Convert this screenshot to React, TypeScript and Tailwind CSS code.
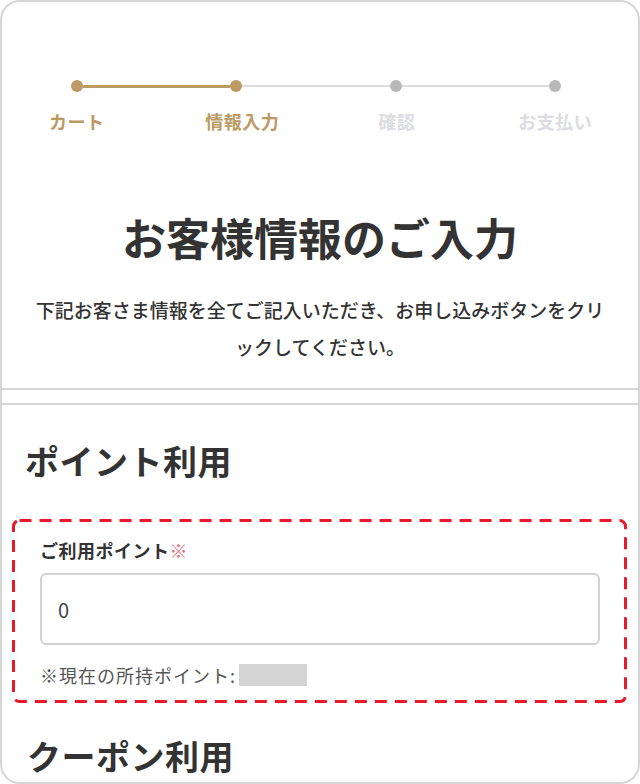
import { useState } from 'react'

const steps = [
  { label: 'カート', done: true, shift: '' },
  { label: '情報入力', done: true, shift: 'pl-[12px]' },
  { label: '確認', done: false, shift: 'pl-[2px]' },
  { label: 'お支払い', done: false, shift: '' },
]

function Stepper() {
  return (
    <div className="pt-[78px]">
      {/* track */}
      <div className="ml-[69px] flex w-[490px] items-center">
        {steps.map((s, i) => (
          <div key={s.label} className={i === 0 ? 'flex items-center' : 'flex flex-1 items-center'}>
            {i > 0 && (
              <div
                className={
                  s.done ? 'h-[3px] flex-1 bg-[#bb9a63]' : 'h-[2px] flex-1 bg-[#dcdcdc]'
                }
              />
            )}
            <div
              className={`h-3 w-3 shrink-0 rounded-full ${s.done ? 'bg-[#bb9a63]' : 'bg-[#b8b8b8]'}`}
            />
          </div>
        ))}
      </div>
      {/* labels */}
      <div className="-ml-[5px] mt-[17px] grid w-[638px] grid-cols-4">
        {steps.map((s) => (
          <div
            key={s.label}
            className={`text-center text-[18px] font-semibold leading-6 tracking-[0.5px] ${s.shift} ${
              s.done ? 'text-[#bb9a63]' : 'text-[#dcdce2]'
            }`}
          >
            {s.label}
          </div>
        ))}
      </div>
    </div>
  )
}

export default function App() {
  const [points, setPoints] = useState('0')

  return (
    <div className="h-[784px] w-[640px] bg-white font-['Noto_Sans_CJK_JP','Noto_Sans',sans-serif] text-[#333]">
      <div className="h-full w-full overflow-hidden rounded-[20px] border-2 border-[#d6d6d6]">
        <Stepper />

        {/* Heading */}
        <div className="pt-[76px] text-center">
          <h1 className="text-[44px] font-semibold leading-[56px] text-[#333]">
            お客様情報のご入力
          </h1>
          <p className="mx-auto mt-[26px] w-[585px] text-[19px] font-medium leading-[37px] text-[#333]">
            下記お客さま情報を全てご記入いただき、お申し込みボタンをクリックしてください。
          </p>
        </div>

        {/* Section dividers */}
        <div className="-mx-[2px] mt-[23px] border-b-2 border-[#d6d6d6]" />
        <div className="-mx-[2px] mt-[13px] border-t-2 border-[#d6d6d6]" />

        {/* Point section */}
        <section className="px-[10px]">
          <h2 className="mt-[34px] pl-[13px] text-[34px] font-semibold leading-[44px] tracking-[0.5px] text-[#333]">
            ポイント利用
          </h2>

          <div className="relative mt-[36px] h-[184px] w-[615px] px-[28px] pt-[19px]">
            <svg className="pointer-events-none absolute inset-0 h-full w-full" aria-hidden="true">
              <rect
                x="1.5"
                y="1.5"
                width="612"
                height="181"
                rx="6"
                fill="none"
                stroke="#e8192b"
                strokeWidth="3"
                strokeDasharray="12 8"
              />
            </svg>
            <div className="text-[18px] font-semibold leading-6 tracking-[0.5px] text-[#333]">
              ご利用ポイント<span className="font-normal text-[#e56a74]">※</span>
            </div>
            <input
              value={points}
              onChange={(e) => setPoints(e.target.value)}
              className="mt-[11px] h-[72px] w-[560px] rounded-[6px] border-2 border-[#d2d2d2] bg-white px-[16px] text-[20px] text-[#444] outline-none"
            />
            <div className="mt-[18px] flex items-center text-[18px] leading-6 tracking-[1px] text-[#555]">
              ※現在の所持ポイント:
              <span className="ml-[3px] inline-block h-[22px] w-[68px] bg-[#d4d4d4]" />
            </div>
          </div>

          <h2 className="mt-[31px] pl-[15px] text-[34px] font-semibold leading-[44px] tracking-[0.5px] text-[#333]">
            クーポン利用
          </h2>
        </section>
      </div>
    </div>
  )
}
